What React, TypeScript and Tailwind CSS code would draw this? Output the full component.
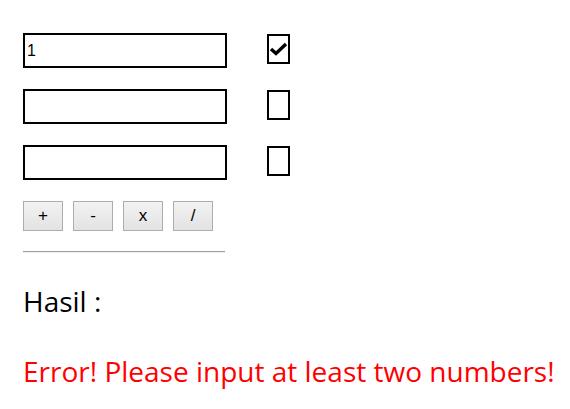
import React, { useState } from 'react';

const ops = ['+', '-', 'x', '/'];

export default function App() {
  const [values, setValues] = useState(['1', '', '']);
  const [checked, setChecked] = useState([true, false, false]);

  return (
    <div className="min-h-screen bg-white pl-[23px] pt-[33px] font-[family-name:Open_Sans,Noto_Sans,sans-serif]">
      {/* input rows */}
      <div className="flex flex-col gap-[21px]">
        {values.map((v, i) => (
          <div key={i} className="flex items-start">
            <input
              value={v}
              onChange={(e) => setValues(values.map((x, j) => (j === i ? e.target.value : x)))}
              className="w-[204px] h-[35px] border-2 border-black px-[2px] text-[16px] text-black outline-none font-[family-name:Liberation_Sans,Arial,sans-serif]"
            />
            <button
              onClick={() => setChecked(checked.map((c, j) => (j === i ? !c : c)))}
              className="ml-[40px] mt-[1px] w-[23px] h-[30px] border-2 border-black bg-white flex items-center justify-center"
            >
              {checked[i] && (
                <svg width="19" height="14" viewBox="0 0 19 14">
                  <path d="M2 7 L7 11.5 L17 2" fill="none" stroke="black" strokeWidth="3.4" strokeLinejoin="miter" />
                </svg>
              )}
            </button>
          </div>
        ))}
      </div>

      {/* operator buttons */}
      <div className="flex gap-[10px] mt-[21px]">
        {ops.map((op) => (
          <button
            key={op}
            className="w-[40px] h-[30px] border border-[#adadad] bg-gradient-to-b from-[#f2f2f2] to-[#e3e3e3] text-[17px] text-black flex items-center justify-center font-[family-name:Liberation_Sans,Arial,sans-serif]"
          >
            {op}
          </button>
        ))}
      </div>

      <div className="mt-[20px] w-[202px] h-[2px] border-t border-[#a0a0a0] border-b-[#eeeeee] border-b" />

      <div className="mt-[29px] text-[28px] text-black leading-[38px]">Hasil :</div>

      <div className="mt-[32px] text-[28px] text-[#ff0000] leading-[38px]">Error! Please input at least two numbers!</div>
    </div>
  );
}
